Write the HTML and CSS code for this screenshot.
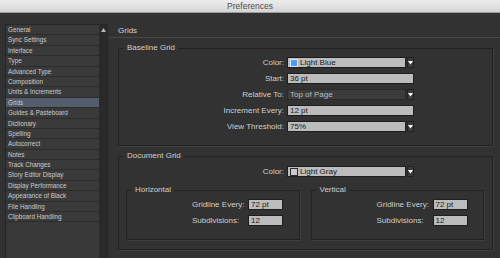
FILE: index.html
```html
<!DOCTYPE html>
<html>
	<head>
		<meta charset="UTF-8">
		<title>Preferences</title>
		<link rel="stylesheet" href="styles.css">
	</head>
	<body>
		<div class="titlebar">Preferences</div>
		<div class="window">
			<div class="sidebar">
				<ul class="nav">
					<li>General</li>
					<li>Sync Settings</li>
					<li>Interface</li>
					<li>Type</li>
					<li>Advanced Type</li>
					<li>Composition</li>
					<li>Units &amp; Increments</li>
					<li class="active">Grids</li>
					<li>Guides &amp; Pasteboard</li>
					<li>Dictionary</li>
					<li>Spelling</li>
					<li>Autocorrect</li>
					<li>Notes</li>
					<li>Track Changes</li>
					<li>Story Editor Display</li>
					<li>Display Performance</li>
					<li>Appearance of Black</li>
					<li>File Handling</li>
					<li>Clipboard Handling</li>
				</ul>
				<div class="scrollbar">
					<svg class="scroll-up" width="5" height="4" viewBox="0 0 5 4"><polygon points="2.5,0 5,4 0,4" fill="#b5b5b5"/></svg>
				</div>
			</div>
			<div class="panel">
				<h1 class="heading">Grids</h1>

				<fieldset class="group">
					<legend>Baseline Grid</legend>
					<div class="form">
						<label>Color:</label>
						<div class="select">
							<span class="value"><i class="swatch swatch-blue"></i>Light Blue</span>
							<span class="arrow"><svg width="5" height="4" viewBox="0 0 5 4"><polygon points="0,0 5,0 2.5,3.5" fill="#fff"/></svg></span>
						</div>
						<label>Start:</label>
						<div class="field">36 pt</div>
						<label>Relative To:</label>
						<div class="select dark">
							<span class="value">Top of Page</span>
							<span class="arrow"><svg width="5" height="4" viewBox="0 0 5 4"><polygon points="0,0 5,0 2.5,3.5" fill="#fff"/></svg></span>
						</div>
						<label>Increment Every:</label>
						<div class="field">12 pt</div>
						<label>View Threshold:</label>
						<div class="select">
							<span class="value">75%</span>
							<span class="arrow"><svg width="5" height="4" viewBox="0 0 5 4"><polygon points="0,0 5,0 2.5,3.5" fill="#fff"/></svg></span>
						</div>
					</div>
				</fieldset>

				<fieldset class="group doc">
					<legend>Document Grid</legend>
					<div class="form">
						<label>Color:</label>
						<div class="select">
							<span class="value"><i class="swatch swatch-gray"></i>Light Gray</span>
							<span class="arrow"><svg width="5" height="4" viewBox="0 0 5 4"><polygon points="0,0 5,0 2.5,3.5" fill="#fff"/></svg></span>
						</div>
					</div>
					<div class="subgroups">
						<fieldset class="group sub">
							<legend>Horizontal</legend>
							<div class="subform">
								<label>Gridline Every:</label>
								<div class="field">72 pt</div>
								<label>Subdivisions:</label>
								<div class="field">12</div>
							</div>
						</fieldset>
						<fieldset class="group sub">
							<legend>Vertical</legend>
							<div class="subform">
								<label>Gridline Every:</label>
								<div class="field">72 pt</div>
								<label>Subdivisions:</label>
								<div class="field">12</div>
							</div>
						</fieldset>
					</div>
				</fieldset>
			</div>
		</div>
	</body>
</html>
```
FILE: styles.css
```css
*{
	box-sizing: border-box;
}
html,body{
	margin: 0;
	padding: 0;
}
body{
	width: 500px;
	height: 258px;
	overflow: hidden;
	background: #323232;
	font-family: "Liberation Sans", Arial, sans-serif;
	color: #cfcfcf;
}
.titlebar{
	height: 13px;
	line-height: 12px;
	text-align: center;
	font-size: 8.5px;
	color: #505050;
	background: linear-gradient(#ececec, #d5d5d5);
	border-bottom: 1px solid #9c9c9c;
}
.window{
	display: flex;
	height: 245px;
}
/* 左侧列表 */
.sidebar{
	display: flex;
	width: 103px;
	margin: 11px 0 0 5px;
	background: #393939;
	border: 1px solid #262626;
	border-bottom: 0;
}
.nav{
	flex: 1;
	list-style: none;
	margin: 0;
	padding: 0;
}
.nav li{
	height: 10.4px;
	line-height: 9.4px;
	padding-left: 2px;
	font-size: 6.3px;
	color: #cbcbcb;
	background: #3a3a3a;
	border-bottom: 1px solid #2c2c2c;
	white-space: nowrap;
}
.nav li.active{
	background: #535d6c;
}
.scrollbar{
	flex: none;
	width: 8px;
	background: #2a2a2a;
	display: flex;
	justify-content: center;
	align-items: flex-start;
	padding-top: 3px;
}
/* 右侧面板 */
.panel{
	flex: 1;
	margin-left: 2px;
}
.heading{
	margin: 0;
	padding: 13px 0 1px 8px;
	font-size: 8px;
	font-weight: normal;
	line-height: 10px;
	color: #d3d3d3;
	border-bottom: 1px solid #484848;
}
.group{
	margin: 5px 7px 0 8px;
	padding: 0 0 13px;
	min-width: 0;
	border: 1px solid #222;
	box-shadow: 1px 1px 0 #3e3e3e;
}
.group legend{
	margin-left: 4px;
	padding: 0 3px 0 4px;
	font-size: 8px;
	line-height: 10px;
	color: #cfcfcf;
}
.form{
	display: grid;
	grid-template-columns: 165px 127px;
	column-gap: 3px;
	row-gap: 5px;
	margin-top: 4px;
	align-items: center;
}
label{
	font-size: 8px;
	line-height: 11px;
	white-space: nowrap;
}
.form label{
	text-align: right;
}
.field,
.select .value{
	height: 11px;
	padding-left: 2px;
	font-size: 8px;
	line-height: 9px;
	color: #1b1b1b;
	background: #bcbcbc;
	border: 1px solid #1e1e1e;
}
.select{
	display: flex;
	gap: 1px;
	height: 11px;
}
.select .value{
	flex: 1;
	display: flex;
	align-items: center;
}
.select .arrow{
	flex: none;
	width: 7px;
	display: flex;
	align-items: center;
	justify-content: center;
	background: #3b3b3b;
	border: 1px solid #222;
}
.select.dark .value{
	color: #bdbdbd;
	background: #3c3c3c;
	border-color: #2a2a2a;
}
.swatch{
	display: inline-block;
	width: 8px;
	height: 8px;
	margin-right: 2px;
}
.swatch-blue{
	background: #4f9bf5;
	border: 1px solid #dfe9f5;
}
.swatch-gray{
	background: #c9c9c9;
	border: 1px solid #2c2c2c;
}
.group.doc{
	padding-bottom: 9px;
}
.doc .form{
	margin-top: 5px;
}
.subgroups{
	display: flex;
	gap: 11px;
	margin: 8px 8px 0 7px;
}
.group.sub{
	flex: 1;
	margin: 0;
}
.subform{
	display: grid;
	grid-template-columns: 53px 35px;
	column-gap: 3px;
	row-gap: 5px;
	margin: 4px 0 0 65px;
	align-items: center;
}
```
